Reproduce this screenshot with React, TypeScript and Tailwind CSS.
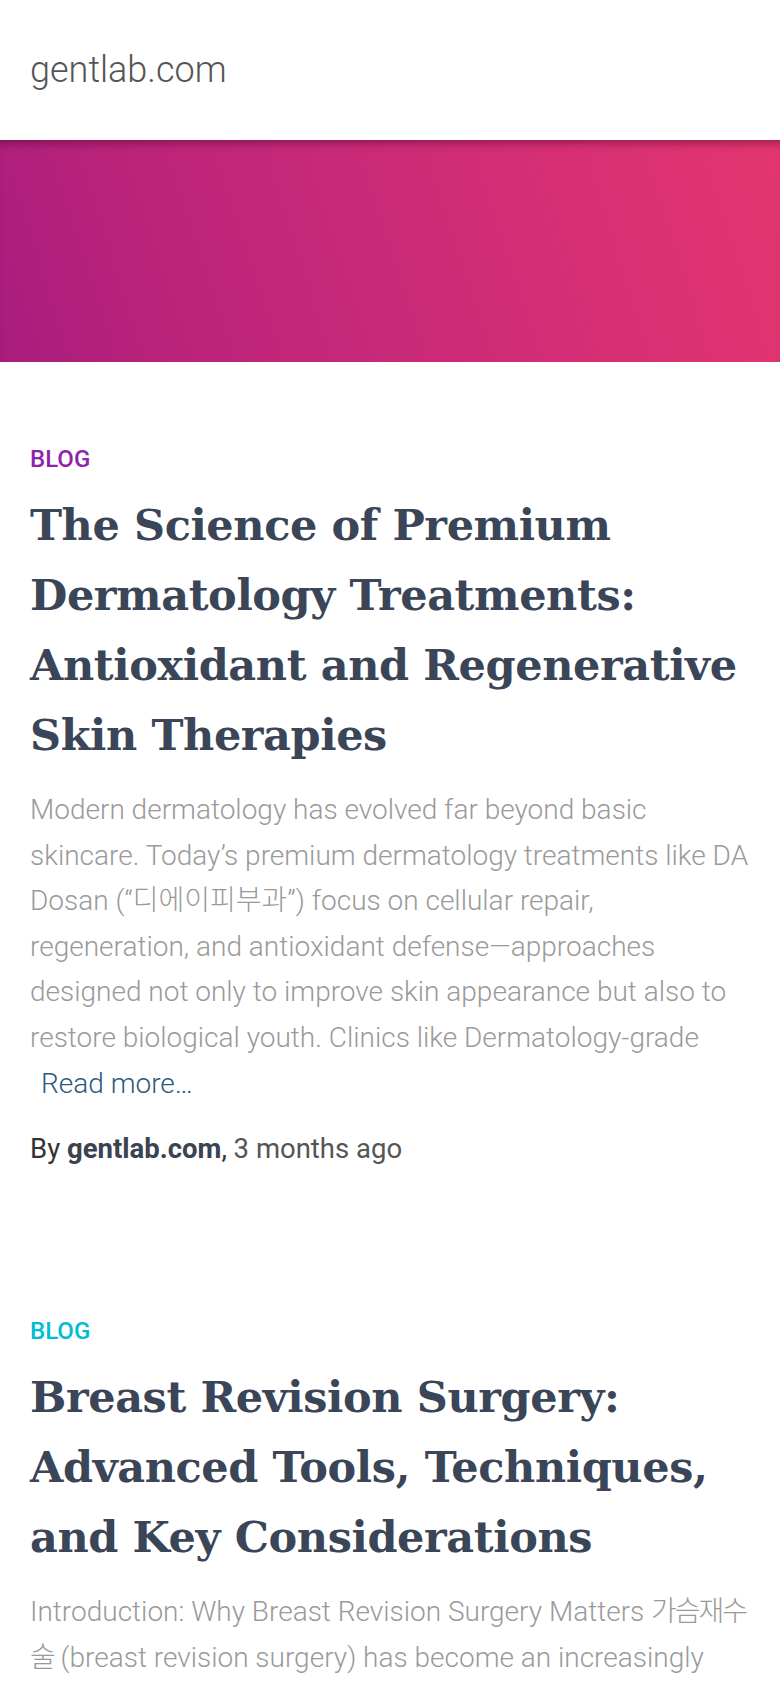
import React from 'react';

const posts = [
  {
    category: 'BLOG',
    catColor: 'text-[#8e24aa]',
    title: 'The Science of Premium Dermatology Treatments: Antioxidant and Regenerative Skin Therapies',
    excerpt: [
      'Modern dermatology has evolved far beyond basic skincare. Today’s premium dermatology treatments like DA Dosan (“',
      '디에이피부과',
      '”) focus on cellular repair, regeneration, and antioxidant defense—approaches designed not only to improve skin appearance but also to restore biological youth. Clinics like Dermatology-grade',
    ],
    koClass: '',
    when: '3 months ago',
  },
  {
    category: 'BLOG',
    catColor: 'text-[#00bcd4]',
    title: 'Breast Revision Surgery: Advanced Tools, Techniques, and Key Considerations',
    excerpt: [
      'Introduction: Why Breast Revision Surgery Matters ',
      '가슴재수술',
      ' (breast revision surgery) has become an increasingly common procedure for patients who want to correct or improve the results of a previous breast surgery.',
    ],
    koClass: 'tracking-[-2px]',
    when: '3 months ago',
  },
];

export default function App() {
  return (
    <div className="min-h-screen bg-white font-['Roboto','Noto_Sans_CJK_KR',sans-serif]">
      <header className="h-[140px] flex items-center px-[30px]">
        <span className="text-[36px] font-light text-[#555555] leading-none">gentlab.com</span>
      </header>

      <div className="h-[222px] bg-[linear-gradient(72deg,#a81d7e_0%,#bb2379_22%,#c8297a_45%,#d62f74_72%,#e3366f_100%)] shadow-[inset_0_9px_8px_-6px_rgba(60,0,30,0.45)]" />

      <main className="pl-[30px] pr-[29px]">
        {posts.map((p, i) => (
          <article key={i} className={i === 0 ? 'pt-[82px] pb-[148px]' : 'pt-0 pb-20'}>
            <div className={`text-[24px] leading-[30px] font-medium ${p.catColor}`}>{p.category}</div>
            <h2 className="mt-[16px] font-['DejaVu_Serif',serif] font-bold text-[43px] leading-[70px] text-[#3a4557] tracking-[-0.4px]">
              {p.title}
            </h2>
            <p className="mt-[17px] text-[28px] leading-[45.6px] font-light text-[#9a9a9a]">
              {p.excerpt[0]}
              <span className={p.koClass}>{p.excerpt[1]}</span>
              {p.excerpt[2]}
              <a href="#" className="block ml-[11px] text-[#2d5a80]">
                Read more…
              </a>
            </p>
            <div className="mt-[24px] text-[27.5px] leading-[38px] text-[#333333]">
              By <span className="font-bold text-[#3a4350]">gentlab.com</span>, <span className="text-[#555555]">{p.when}</span>
            </div>
          </article>
        ))}
      </main>
    </div>
  );
}
